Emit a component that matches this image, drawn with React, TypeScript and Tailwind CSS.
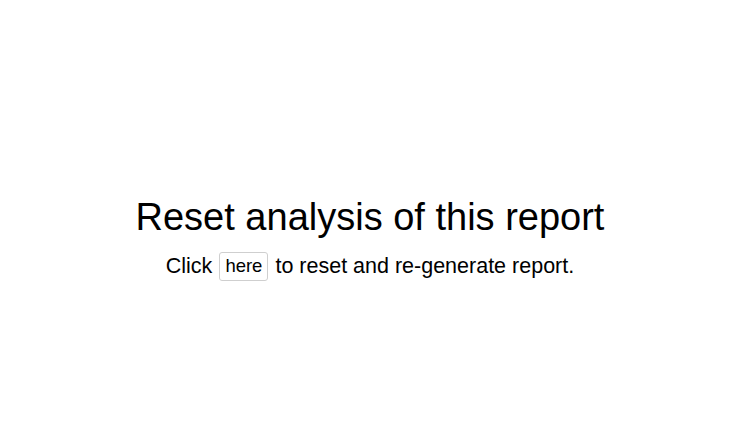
export default function App() {
  return (
    <div className="h-screen w-full bg-white flex flex-col items-center justify-center font-['Liberation_Sans',Arial,sans-serif] text-black">
      <div className="flex flex-col items-center mt-[42px]">
        <h1 className="text-[38px] leading-[44px]">Reset analysis of this report</h1>
        <p className="mt-[12px] text-[21.5px] leading-[30px] flex items-center">
          Click
          <button className="mx-[7px] h-[29px] px-[5px] text-[18.5px] leading-none border border-[#cfcfcf] rounded-[3px] bg-white">
            here
          </button>
          to reset and re-generate report.
        </p>
      </div>
    </div>
  )
}
